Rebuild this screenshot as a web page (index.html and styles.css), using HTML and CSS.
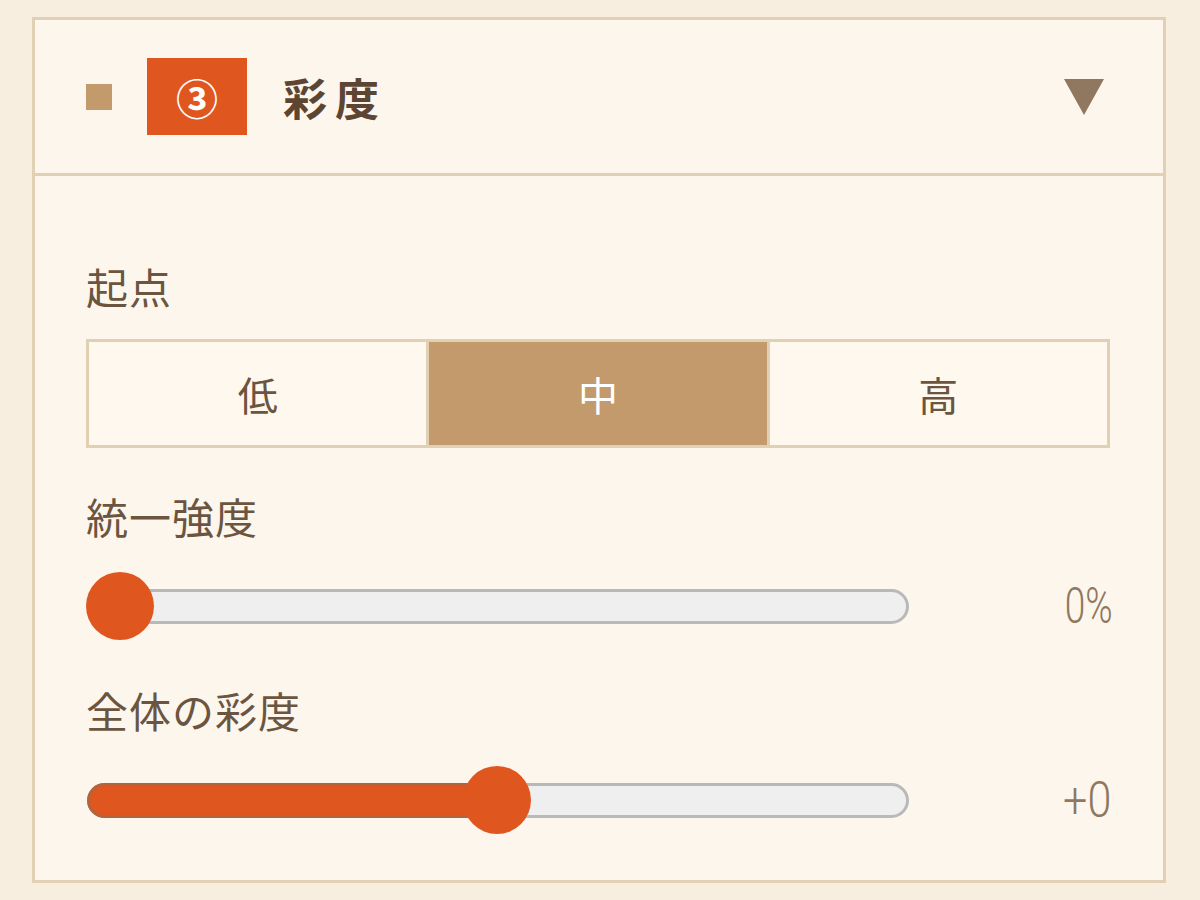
FILE: index.html
```html
<!DOCTYPE html>
<html lang="ja">
<head>
<meta charset="utf-8">
<title>彩度</title>
<link rel="stylesheet" href="styles.css">
</head>
<body>
<section class="panel">
  <header class="panel-head">
    <span class="marker"></span>
    <span class="step">③</span>
    <h2 class="title">彩度</h2>
    <svg class="caret" width="40" height="36" viewBox="0 0 40 36"><polygon points="0,0 40,0 20,36" fill="#8f7760"/></svg>
  </header>
  <div class="panel-body">
    <div class="label label-first">起点</div>
    <div class="segment">
      <button class="seg-item">低</button>
      <button class="seg-item active">中</button>
      <button class="seg-item">高</button>
    </div>
    <div class="label label-gap">統一強度</div>
    <div class="slider-row">
      <div class="slider">
        <div class="track"></div>
        <div class="thumb" style="left: 0px;"></div>
      </div>
      <span class="value"><span class="value-text">0%</span></span>
    </div>
    <div class="label label-gap2">全体の彩度</div>
    <div class="slider-row">
      <div class="slider">
        <div class="track"><div class="fill" style="width: 414px;"></div></div>
        <div class="thumb" style="left: 377px;"></div>
      </div>
      <span class="value"><span class="value-text value-wide">+0</span></span>
    </div>
  </div>
</section>
</body>
</html>
```
FILE: styles.css
```css
html, body {
  margin: 0;
  padding: 0;
}
body {
  background: #f7eee0;
  width: 1200px;
  height: 900px;
  overflow: hidden;
  font-family: "Noto Sans CJK JP", "Noto Sans", sans-serif;
}
.panel {
  box-sizing: border-box;
  width: 1134px;
  height: 866px;
  margin: 17px 0 0 32px;
  border: 3px solid #e1d0b3;
  background: #fdf6ec;
}
.panel-head {
  height: 153px;
  border-bottom: 3px solid #e1d0b3;
  display: flex;
  align-items: center;
  padding: 0 59px 0 51px;
}
.marker {
  width: 26px;
  height: 26px;
  background: #c39a6b;
  flex: none;
}
.step {
  margin-left: 35px;
  width: 100px;
  height: 77px;
  background: #e0561f;
  color: #fff;
  display: flex;
  align-items: center;
  justify-content: center;
  font-size: 42px;
  font-weight: 700;
  line-height: 1;
  flex: none;
}
.title {
  margin: 0 0 0 36px;
  font-size: 44px;
  font-weight: 700;
  letter-spacing: 8px;
  color: #5c4532;
  line-height: 1;
  flex: 1;
}
.caret {
  flex: none;
  display: block;
}
.panel-body {
  padding: 0 53px 0 51px;
}
.label {
  font-size: 42px;
  line-height: 48px;
  letter-spacing: 1px;
  color: #6b5540;
}
.label-first {
  margin-top: 86px;
}
.label-gap {
  margin-top: 44px;
}
.label-gap2 {
  margin-top: 46px;
}
.segment {
  margin-top: 29px;
  display: flex;
  border: 3px solid #e1d0b3;
  height: 103px;
}
.seg-item {
  flex: 1;
  border: 0;
  margin: 0;
  padding: 0;
  background: #fef8ef;
  font-family: inherit;
  font-size: 40px;
  color: #6b5540;
  display: flex;
  align-items: center;
  justify-content: center;
}
.seg-item + .seg-item {
  border-left: 3px solid #e1d0b3;
}
.seg-item.active {
  background: #c39a6b;
  color: #fff;
}
.slider-row {
  margin-top: 32px;
  display: flex;
  align-items: center;
  height: 68px;
}
.slider {
  position: relative;
  width: 822px;
  height: 68px;
  margin-left: 1px;
  display: flex;
  align-items: center;
}
.track {
  position: relative;
  box-sizing: border-box;
  width: 100%;
  height: 35px;
  background: #efefef;
  border: 3px solid #b9b9b9;
  border-radius: 18px;
}
.fill {
  position: absolute;
  left: -3px;
  top: -3px;
  height: 35px;
  box-sizing: border-box;
  background: #e0561f;
  border: 3px solid #b4633f;
  border-right: 0;
  border-radius: 18px 0 0 18px;
}
.thumb {
  position: absolute;
  top: 0;
  width: 68px;
  height: 68px;
  margin-left: -1px;
  border-radius: 50%;
  background: #e0561f;
}
.value {
  flex: 1;
  text-align: right;
  margin-right: -3px;
  font-family: Roboto, "Liberation Sans", sans-serif;
  font-weight: 300;
  font-size: 50px;
  line-height: 1;
  color: #8f7760;
}
.value-text {
  display: inline-block;
  transform: scaleX(0.74);
  transform-origin: right center;
}
.value-text.value-wide {
  transform: scaleX(0.86) translateX(-2px);
}
```
